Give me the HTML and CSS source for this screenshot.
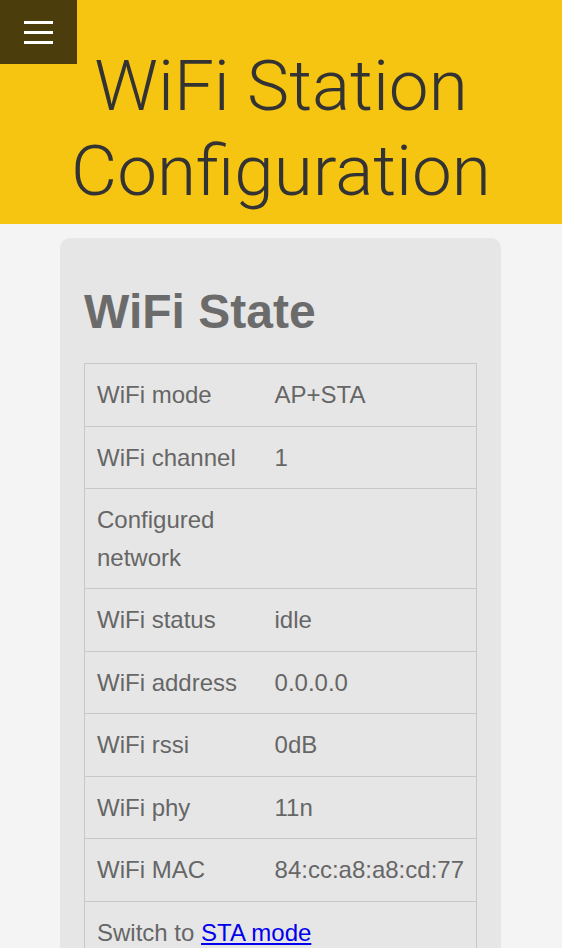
FILE: index.html
```html
<!DOCTYPE html>
<html lang="en">
<head>
    <meta charset="UTF-8">
    <meta name="viewport" content="width=device-width, initial-scale=1.0">
    <title>WiFi Station Configuration</title>
    <link rel="stylesheet" href="styles.css">
</head>
<body>
    <a class="menu-link" href="#menu">
        <span></span>
        <span></span>
        <span></span>
    </a>

    <div class="header">
        <h1>WiFi Station Configuration</h1>
    </div>

    <div class="content">
        <div class="card">
            <h2>WiFi State</h2>
            <table class="state-table">
                <tr><td>WiFi mode</td><td>AP+STA</td></tr>
                <tr><td>WiFi channel</td><td>1</td></tr>
                <tr><td>Configured network</td><td></td></tr>
                <tr><td>WiFi status</td><td>idle</td></tr>
                <tr><td>WiFi address</td><td>0.0.0.0</td></tr>
                <tr><td>WiFi rssi</td><td>0dB</td></tr>
                <tr><td>WiFi phy</td><td>11n</td></tr>
                <tr><td>WiFi MAC</td><td>84:cc:a8:a8:cd:77</td></tr>
                <tr><td colspan="2">Switch to <a href="#sta">STA mode</a></td></tr>
            </table>
        </div>
    </div>
</body>
</html>
```

FILE: styles.css
```css
body {
    font-family: 'Liberation Sans', Arial, sans-serif;
    margin: 0;
    padding: 0;
    background-color: #f4f4f4;
    color: #666;
}

/* ハンバーガーメニュー */
.menu-link {
    position: absolute;
    top: 0;
    left: 0;
    width: 77px;
    height: 64px;
    background-color: #4b3d0c;
    display: flex;
    flex-direction: column;
    justify-content: center;
    align-items: center;
    gap: 7px;
}

.menu-link span {
    display: block;
    width: 29px;
    height: 3px;
    background-color: #fff;
}

.header {
    background-color: #f5c512;
    text-align: center;
    padding: 43px 0 11px;
}

.header h1 {
    margin: 0;
    font-family: 'Roboto', 'Liberation Sans', sans-serif;
    font-weight: 300;
    font-size: 71px;
    line-height: 85px;
    color: #333;
}

.content {
    padding: 14px 0 40px;
}

.card {
    width: 393px;
    margin: 0 0 0 60px;
    padding: 24px 24px 30px;
    background-color: #e6e6e6;
    border-radius: 10px;
}

.card h2 {
    font-size: 48px;
    font-weight: bold;
    margin: 22px 0 23px;
    line-height: 56px;
    color: #6b6b6b;
}

.state-table {
    width: 100%;
    border-collapse: collapse;
    border: 1px solid #c8c8c8;
    font-size: 24px;
    line-height: 37.5px;
}

.state-table td {
    padding: 12px;
    border-top: 1px solid #c8c8c8;
    border-bottom: 1px solid #c8c8c8;
    vertical-align: top;
    text-align: left;
}

.state-table td:first-child {
    width: 155px;
}

.state-table a {
    color: #0000ee;
}
```
